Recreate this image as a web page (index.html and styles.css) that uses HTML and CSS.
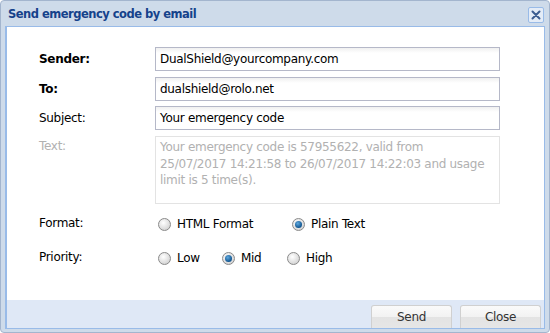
FILE: index.html
```html
<!DOCTYPE html>
<html>
<head>
<meta charset="utf-8">
<link rel="stylesheet" href="styles.css">
</head>
<body>
<div class="win">
  <div class="head">
    <span class="title">Send emergency code by email</span>
    <span class="close"><svg width="14" height="14" viewBox="0 0 14 14"><path d="M3.5 3.5 L10.5 10.5 M10.5 3.5 L3.5 10.5" stroke="#3d5d91" stroke-width="2" stroke-linecap="round"/></svg></span>
  </div>
  <div class="frame">
    <div class="body">
      <div class="row r-sender"><label class="lbl bold">Sender:</label><div class="field">DualShield@yourcompany.com</div></div>
      <div class="row r-to"><label class="lbl bold">To:</label><div class="field">dualshield@rolo.net</div></div>
      <div class="row r-subj"><label class="lbl">Subject:</label><div class="field">Your emergency code</div></div>
      <div class="row r-text"><label class="lbl dis">Text:</label><div class="area">Your emergency code is 57955622, valid from<br>25/07/2017 14:21:58 to 26/07/2017 14:22:03 and usage<br>limit is 5 time(s).</div></div>
      <div class="row r-fmt"><label class="lbl">Format:</label>
        <div class="radios">
          <span class="opt w-html"><span class="radio"></span>HTML Format</span>
          <span class="opt"><span class="radio on"></span>Plain Text</span>
        </div>
      </div>
      <div class="row r-pri"><label class="lbl">Priority:</label>
        <div class="radios">
          <span class="opt w-low"><span class="radio"></span>Low</span>
          <span class="opt w-mid"><span class="radio on"></span>Mid</span>
          <span class="opt"><span class="radio"></span>High</span>
        </div>
      </div>
    </div>
    <div class="foot">
      <button class="btn">Send</button>
      <button class="btn">Close</button>
    </div>
  </div>
</div>
</body>
</html>
```

FILE: styles.css
```css
html, body { margin: 0; padding: 0; }
body { width: 550px; height: 333px; overflow: hidden; font-family: "DejaVu Sans", Verdana, sans-serif; font-size: 12px; letter-spacing: -0.3px; color: #000; }
.win {
  box-sizing: border-box; width: 550px; height: 333px;
  background: #cedbea; border: 1px solid #a3b5ce; border-radius: 4px;
  padding: 0 4px 3px 4px; display: flex; flex-direction: column;
}
.head { height: 25px; display: flex; align-items: center; justify-content: space-between; padding-left: 3px; }
.title { font-weight: bold; color: #15428b; font-size: 11.5px; letter-spacing: -0.5px; }
.close {
  width: 14px; height: 14px; border: 1px solid #99bbe8; border-radius: 2px; background: #e4ecf7;
  display: flex; margin-right: 1px; margin-top: 2px;
}
.frame { flex: 1; border: 1px solid #99bbe8; border-left-width: 2px; display: flex; flex-direction: column; background: #dfe8f6; }
.body { background: #fff; flex: 1; padding-top: 20px; }
.row { display: flex; align-items: flex-start; }
.lbl { width: 116px; padding-left: 32px; line-height: 24px; flex: none; }
.bold { font-weight: bold; }
.dis { color: #b1b1b1; }
.field {
  box-sizing: border-box; width: 345px; height: 24px; border: 1px solid #b5b8c8;
  background: linear-gradient(#f0f0f0, #fff 5px); padding: 0 4px; line-height: 22px; white-space: nowrap;
}
.r-to { margin-top: 6px; }
.r-subj { margin-top: 5px; }
.r-text { margin-top: 6px; }
.r-text .lbl { line-height: 20px; }
.area {
  box-sizing: border-box; width: 345px; height: 68px; border: 1px solid #e3e3e3; color: #b1b1b1;
  padding: 2px 4px; line-height: 16.5px; white-space: nowrap;
}
.r-fmt { margin-top: 9px; }
.r-pri { margin-top: 14px; }
.r-fmt .lbl, .r-pri .lbl { line-height: 20px; }
.radios { display: flex; padding-left: 3px; padding-top: 4px; }
.opt { display: flex; align-items: center; }
.w-html { width: 134px; }
.w-low { width: 64px; }
.w-mid { width: 65px; }
.radio {
  box-sizing: border-box; width: 13px; height: 13px; border-radius: 50%;
  border: 1px solid #8a8a8a; background: radial-gradient(circle at 40% 35%, #fff, #d8d8d8 70%, #c4c4c4);
  margin-right: 6px; position: relative;
}
.radio.on::after {
  content: ""; position: absolute; left: 2px; top: 2px; width: 7px; height: 7px; border-radius: 50%;
  background: radial-gradient(circle at 40% 35%, #5fa8de, #0b4f8a 75%);
}
.foot { height: 28px; display: flex; justify-content: flex-end; align-items: flex-end; gap: 8px; padding-right: 3px; }
.btn {
  width: 81px; height: 23px; font-family: inherit; font-size: 12px; letter-spacing: -0.3px; color: #333;
  border: 1px solid #d0d0d0; border-bottom: none; border-radius: 3px 3px 0 0;
  background: linear-gradient(#fafafa, #f2f2f2 50%, #e3e3e3 50%, #e6e6e6); padding: 0;
}
```
